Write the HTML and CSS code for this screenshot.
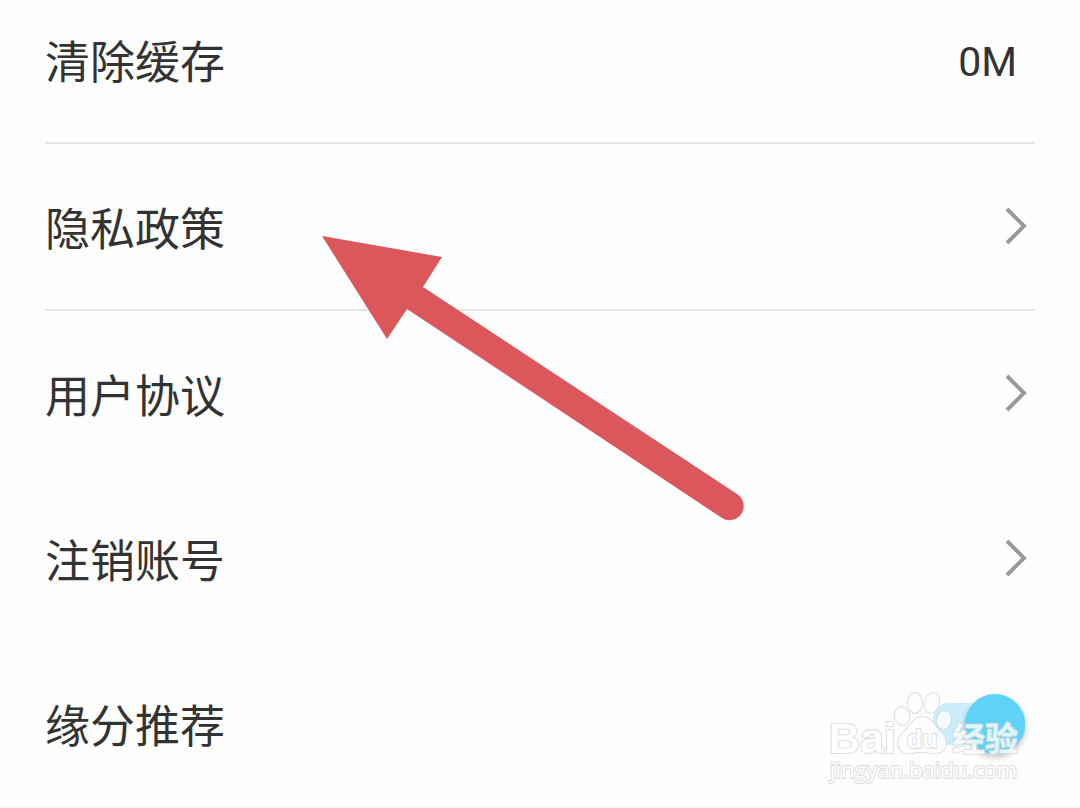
FILE: index.html
```html
<!DOCTYPE html>
<html lang="zh-CN">
<head>
  <meta charset="UTF-8">
  <meta name="viewport" content="width=device-width, initial-scale=1.0">
  <title>设置</title>
  <link rel="stylesheet" href="styles.css">
</head>
<body>
  <main class="settings">
    <button class="row row-first line" type="button">
      <span class="label">清除缓存</span>
      <span class="value">0M</span>
    </button>
    <a class="row line" href="#privacy">
      <span class="label">隐私政策</span>
      <svg class="chevron" viewBox="0 0 24 40"><path d="M3 2 L20 19 L3 36"/></svg>
    </a>
    <a class="row" href="#agreement">
      <span class="label">用户协议</span>
      <svg class="chevron" viewBox="0 0 24 40"><path d="M3 2 L20 19 L3 36"/></svg>
    </a>
    <a class="row" href="#account">
      <span class="label">注销账号</span>
      <svg class="chevron" viewBox="0 0 24 40"><path d="M3 2 L20 19 L3 36"/></svg>
    </a>
    <div class="row">
      <label class="label" for="recommend">缘分推荐</label>
      <input class="switch" type="checkbox" id="recommend" checked>
    </div>
  </main>
  <div class="section-gap"></div>

  <!-- arrow pointing at the privacy row -->
  <svg class="arrow" viewBox="0 0 424 288">
    <path d="M2 1 L122 22 L103 52 L417 259 A14 14 0 0 1 402 283 L87 74 L67 104 Z"/>
  </svg>

  <svg class="watermark" viewBox="0 0 204 100">
    <g class="mark">
      <text class="mark-latin" x="4" y="64">Bai</text>
      <ellipse cx="77" cy="27" rx="7" ry="9" transform="rotate(-12 77 27)"/>
      <ellipse cx="90" cy="14" rx="7" ry="10"/>
      <ellipse cx="107" cy="14" rx="7" ry="10" transform="rotate(14 107 14)"/>
      <ellipse cx="119" cy="31" rx="7" ry="9" transform="rotate(14 119 31)"/>
      <path d="M97 28 C107 28 109 37 115 42 C121 47 123 54 119 60 C114 67 104 63 97 63 C90 63 80 67 75 60 C71 54 74 47 80 42 C86 37 88 28 97 28 Z"/>
      <text class="mark-du" x="82" y="59">du</text>
      <text class="mark-han" x="127" y="62">经验</text>
      <text class="mark-url" x="5" y="89">jingyan.baidu.com</text>
    </g>
  </svg>
</body>
</html>
```
FILE: styles.css
```css
* {
  box-sizing: border-box;
}

body {
  margin: 0;
  position: relative;
  background-color: #fefefe;
  color: #333;
  font-family: Roboto, "Noto Sans CJK SC", sans-serif;
  overflow-x: hidden;
}

.settings {
  padding: 0 45px;
}

.row {
  display: flex;
  align-items: center;
  justify-content: space-between;
  width: 100%;
  height: 165px;
  padding: 0 7px 0 0;
  border: none;
  background: none;
  color: inherit;
  font-family: inherit;
  text-decoration: none;
  cursor: pointer;
}

.line {
  height: 167px;
  border-bottom: 2px solid #e5e5e5;
}

.row-first {
  height: 144px;
  padding: 0 18px 23px 0;
}

.label {
  font-family: "Noto Sans CJK SC", sans-serif;
  font-size: 45px;
  line-height: 60px;
}

.value {
  padding-top: 4px;
  font-size: 41px;
  line-height: 60px;
}

.chevron {
  width: 24px;
  height: 40px;
  fill: none;
  stroke: #999;
  stroke-width: 4;
}

/* toggle */
.switch {
  appearance: none;
  display: flex;
  align-items: center;
  justify-content: flex-end;
  width: 92px;
  height: 42px;
  margin: 0 3px 0 0;
  border-radius: 16px;
  background-color: #c9effd;
  cursor: pointer;
}

.switch::before {
  content: "";
  flex: none;
  width: 60px;
  height: 60px;
  border-radius: 50%;
  background-color: #5fd2f7;
  box-shadow: 0 3px 6px rgba(0, 0, 0, 0.25);
}

.section-gap {
  height: 2px;
  background-color: #f7f7f7;
}

/* overlays */
.arrow {
  position: absolute;
  top: 235px;
  left: 320px;
  width: 424px;
  height: 288px;
  fill: #db575c;
  pointer-events: none;
}

.watermark {
  position: absolute;
  right: 51px;
  bottom: 19px;
  width: 204px;
  height: 100px;
  pointer-events: none;
}

.mark {
  fill: #fff;
  stroke: #d6d6d6;
  stroke-width: 2;
  stroke-linejoin: round;
  paint-order: stroke;
  opacity: 0.8;
}

.mark text {
  font-family: "Liberation Sans", sans-serif;
  font-weight: bold;
}

.mark .mark-latin {
  font-size: 43px;
}

.mark .mark-du {
  font-size: 25px;
}

.mark .mark-han {
  font-family: "Noto Sans CJK SC", sans-serif;
  font-size: 33px;
}

.mark .mark-url {
  font-family: "Open Sans", sans-serif;
  font-size: 22px;
  font-weight: normal;
}
```
